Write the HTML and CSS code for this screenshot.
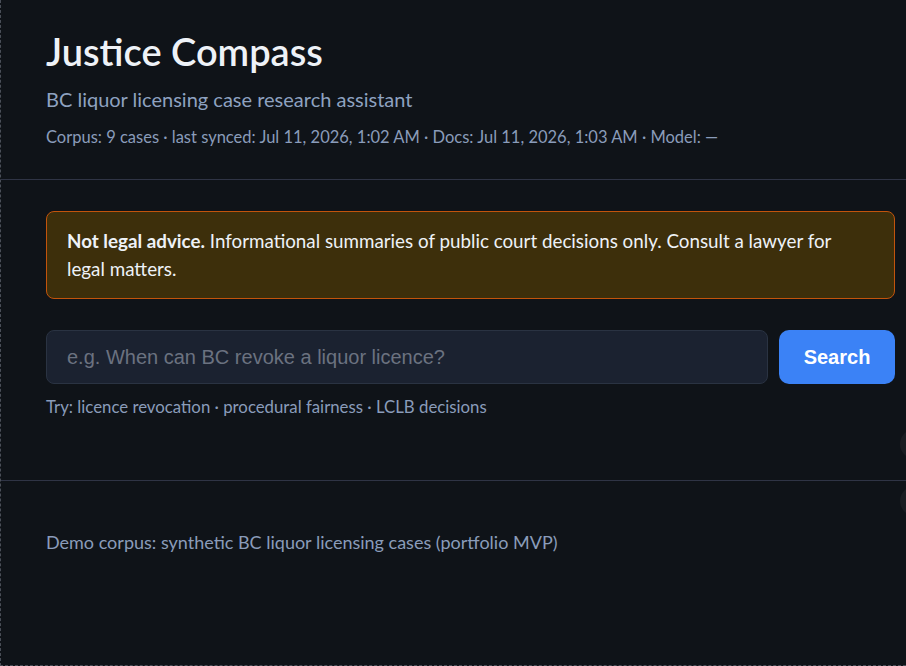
FILE: index.html
```html
<!DOCTYPE html>
<html lang="en">
<head>
    <meta charset="UTF-8">
    <meta name="viewport" content="width=device-width, initial-scale=1.0">
    <title>Justice Compass</title>
    <link rel="stylesheet" href="styles.css">
</head>
<body>

<div class="frame">
    <header class="site-header">
        <h1>Justice Compass</h1>
        <p class="tagline">BC liquor licensing case research assistant</p>
        <p class="meta">Corpus: 9 cases · last synced: Jul 11, 2026, 1:02 AM · Docs: Jul 11, 2026, 1:03 AM · Model: —</p>
    </header>

    <main class="content">
        <div class="notice">
            <strong>Not legal advice.</strong> Informational summaries of public court decisions only. Consult a lawyer for legal matters.
        </div>

        <form class="search-form" onsubmit="return false;">
            <input type="text" class="search-input" placeholder="e.g. When can BC revoke a liquor licence?">
            <button type="submit" class="search-btn">Search</button>
        </form>
        <p class="suggestions">Try: licence revocation · procedural fairness · LCLB decisions</p>
    </main>

    <footer class="site-footer">
        <p>Demo corpus: synthetic BC liquor licensing cases (portfolio MVP)</p>
    </footer>

    <div class="edge-dot dot-one"></div>
    <div class="edge-dot dot-two"></div>
</div>

</body>
</html>
```

FILE: styles.css
```css
html, body {
    margin: 0;
    padding: 0;
    background: #0f1318;
}
body {
    font-family: 'Lato', 'Noto Sans', sans-serif;
    color: #e6edf3;
    overflow: hidden;
}
.frame {
    position: relative;
    height: 665px;
    border-left: 1px dashed #4a4f58;
    border-bottom: 1px dashed #4a4f58;
    overflow: hidden;
}
.site-header {
    padding: 27px 11px 0 45px;
    height: 152px;
    border-bottom: 1px solid #2f3445;
}
.site-header h1 {
    margin: 0;
    font-size: 38px;
    font-weight: 600;
    line-height: 48px;
    color: #eef2f7;
}
.tagline {
    margin: 11px 0 0;
    font-size: 20px;
    line-height: 26px;
    color: #8ea2c0;
}
.meta {
    margin: 14px 0 0;
    font-size: 16.5px;
    line-height: 22px;
    color: #8a9cba;
}
.content {
    padding: 31px 11px 0 45px;
    height: 269px;
    border-bottom: 1px solid #2f3445;
}
.notice {
    background: #3d2f0b;
    border: 1px solid #c2540c;
    border-radius: 8px;
    padding: 15px 30px 15px 20px;
    font-size: 18.8px;
    line-height: 28px;
    color: #eef2f7;
}
.notice strong {
    font-weight: 700;
}
.search-form {
    display: flex;
    gap: 11px;
    margin-top: 31px;
}
.search-input {
    flex: 1;
    height: 54px;
    box-sizing: border-box;
    padding: 0 20px;
    background: #1b2230;
    border: 1px solid #2a3342;
    border-radius: 8px;
    font-family: 'Liberation Sans', Arial, sans-serif;
    font-size: 20px;
    color: #e6edf3;
}
.search-input::placeholder {
    color: #6b7280;
}
.search-btn {
    width: 116px;
    height: 54px;
    border: none;
    border-radius: 10px;
    background: #3b82f6;
    color: #fff;
    font-family: 'Liberation Sans', Arial, sans-serif;
    font-size: 20px;
    font-weight: 700;
    cursor: pointer;
}
.suggestions {
    margin: 12px 0 0;
    font-size: 16.8px;
    line-height: 22px;
    color: #8a9cba;
}
.site-footer {
    padding: 49px 11px 0 45px;
}
.site-footer p {
    margin: 0;
    font-size: 18px;
    line-height: 24px;
    color: #8a9cba;
}
.edge-dot {
    position: absolute;
    right: -24px;
    width: 30px;
    height: 30px;
    border-radius: 50%;
    background: #1a1d22;
}
.dot-one {
    top: 429px;
}
.dot-two {
    top: 486px;
}
```
